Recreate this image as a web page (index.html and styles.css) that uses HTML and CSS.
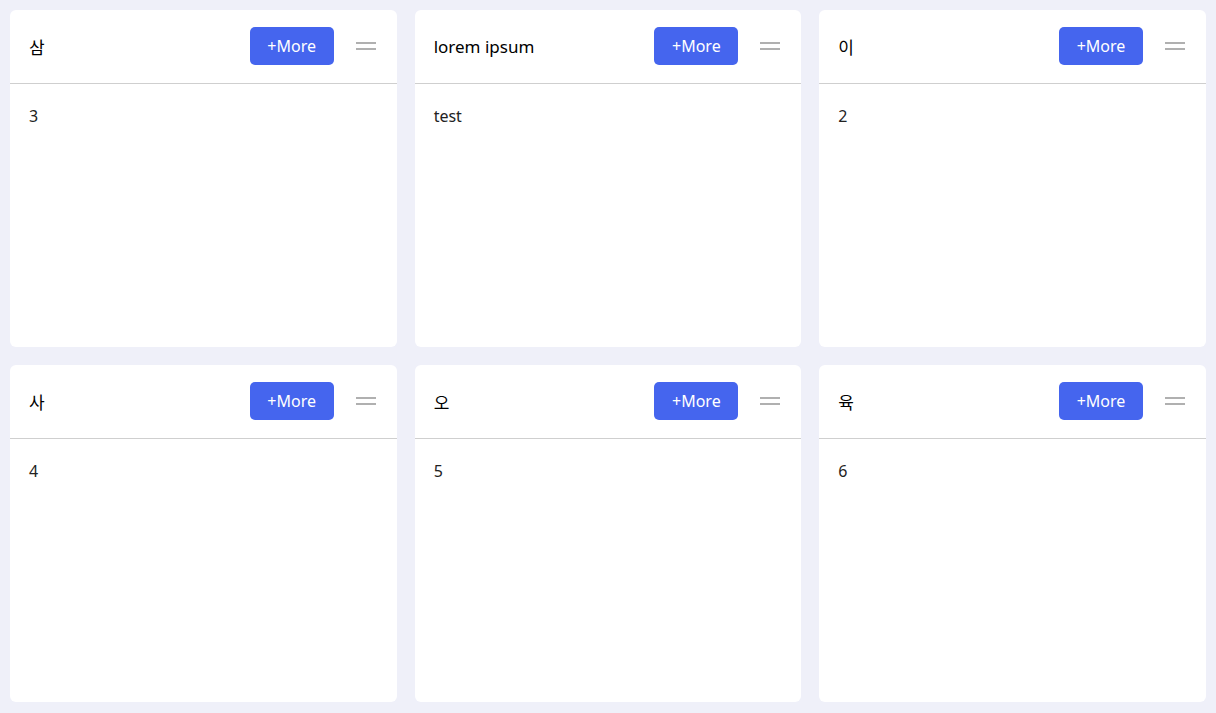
FILE: index.html
```html
<!DOCTYPE html>
<html lang="ko">
<head>
  <meta charset="UTF-8">
  <meta name="viewport" content="width=device-width, initial-scale=1.0">
  <title>Board</title>
  <link rel="stylesheet" href="styles.css">
</head>
<body>
  <div class="board">
    <!-- 카드 목록 -->
    <div class="card">
      <div class="card-head">
        <h2 class="card-title">삼</h2>
        <button class="more-btn">+More</button>
        <span class="handle"></span>
      </div>
      <div class="card-body">3</div>
    </div>
    <div class="card">
      <div class="card-head">
        <h2 class="card-title">lorem ipsum</h2>
        <button class="more-btn">+More</button>
        <span class="handle"></span>
      </div>
      <div class="card-body">test</div>
    </div>
    <div class="card">
      <div class="card-head">
        <h2 class="card-title">이</h2>
        <button class="more-btn">+More</button>
        <span class="handle"></span>
      </div>
      <div class="card-body">2</div>
    </div>
    <div class="card">
      <div class="card-head">
        <h2 class="card-title">사</h2>
        <button class="more-btn">+More</button>
        <span class="handle"></span>
      </div>
      <div class="card-body">4</div>
    </div>
    <div class="card">
      <div class="card-head">
        <h2 class="card-title">오</h2>
        <button class="more-btn">+More</button>
        <span class="handle"></span>
      </div>
      <div class="card-body">5</div>
    </div>
    <div class="card">
      <div class="card-head">
        <h2 class="card-title">육</h2>
        <button class="more-btn">+More</button>
        <span class="handle"></span>
      </div>
      <div class="card-body">6</div>
    </div>
  </div>
</body>
</html>
```

FILE: styles.css
```css
* {
  box-sizing: border-box;
}

body {
  font-family: 'Noto Sans', 'Noto Sans CJK KR', sans-serif;
  margin: 0;
  padding: 0;
  background-color: #eff0f9;
}

.board {
  height: 100vh;
  padding: 10px 10px 11px;
  display: grid;
  grid-template-columns: repeat(3, 1fr);
  grid-template-rows: repeat(2, 1fr);
  gap: 18px;
}

.card {
  background-color: white;
  border-radius: 6px;
  display: flex;
  flex-direction: column;
  overflow: hidden;
}

.card-head {
  height: 74px;
  display: flex;
  align-items: center;
  padding: 0 21px 1px 19px;
  border-bottom: 1px solid #cfcfcf;
}

.card-title {
  flex: 1;
  margin: 0;
  font-size: 17px;
  font-weight: 400;
  color: #000;
}

.more-btn {
  width: 84px;
  height: 38px;
  padding: 0;
  background-color: #4565ee;
  color: white;
  font-family: 'Noto Sans', sans-serif;
  font-size: 16px;
  border: none;
  border-radius: 5px;
  cursor: pointer;
}

.handle {
  width: 20px;
  height: 8px;
  margin-left: 22px;
  border-top: 2px solid #b0b0b0;
  border-bottom: 2px solid #b0b0b0;
}

.card-body {
  padding: 21px 19px;
  font-size: 16px;
  color: #222;
}
```
